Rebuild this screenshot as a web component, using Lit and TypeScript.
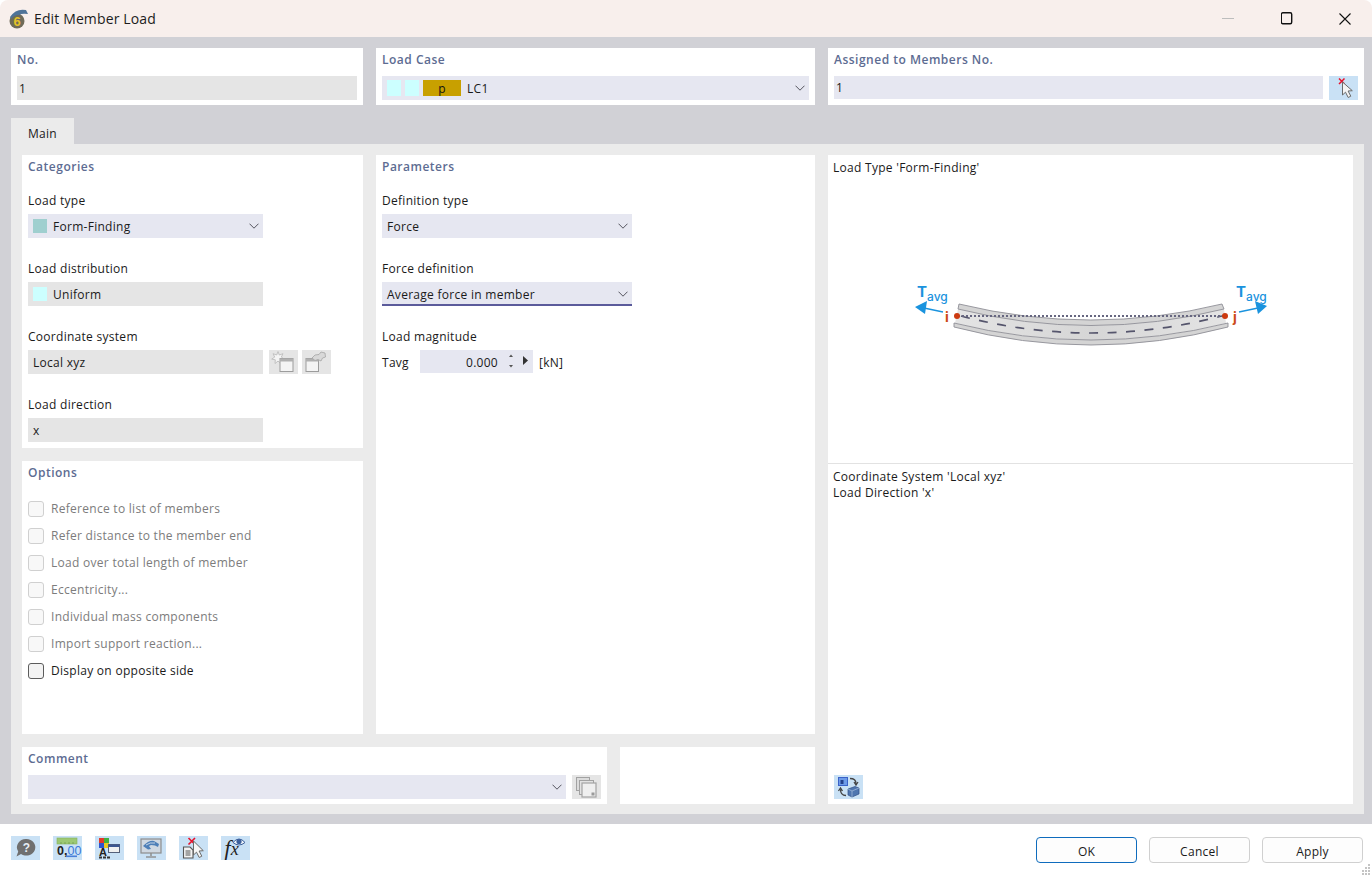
import { LitElement, html, css } from "lit";
import { customElement } from "lit/decorators.js";

const chevron = html`<svg class="chev" viewBox="0 0 10 6" width="10" height="6"><path d="M.5 .7 L5 5.200 L9.500 .7" fill="none" stroke="#55555f" stroke-width="1"/></svg>`;

const winNew = html`<svg viewBox="0 0 29 24" width="29" height="24">
  <path d="M9 1.500 l1.300 3.500 3.700-1.300-1.700 3.400 3 2-3.600.7 .3 3.700-3-2.400-3 2.400 .3-3.700-3.600-.7 3-2-1.700-3.400 3.700 1.300z" fill="#f4f4f4" stroke="#b8b8b8" stroke-width=".8"/>
  <rect x="11" y="8.500" width="13" height="13" fill="#f4f4f4" stroke="#9c9c9c"/><rect x="11" y="8.500" width="13" height="3" fill="#b0b0b0"/></svg>`;
const winEdit = html`<svg viewBox="0 0 29 24" width="29" height="24">
  <rect x="4" y="8.500" width="12.500" height="13" fill="#f4f4f4" stroke="#9c9c9c"/><rect x="4" y="8.500" width="12.500" height="3" fill="#b0b0b0"/>
  <path d="M10 8 l3-3 4-.5 2-2.500 4 1 .5 4-3 1-1.500 3-3-1.500-3 1z" fill="#d8d8d8" stroke="#a5a5a5" stroke-width=".8"/></svg>`;
const stackIcon = html`<svg viewBox="0 0 29 24" width="29" height="24">
  <rect x="4.500" y="2.500" width="13" height="13" fill="#dcdcdc" stroke="#a2a2a2"/><rect x="7.500" y="5.500" width="14" height="14" fill="#e2e2e2" stroke="#a2a2a2"/><rect x="10" y="8" width="14" height="14" fill="#efefef" stroke="#a2a2a2" stroke-width="1.200"/><rect x="19.500" y="17.500" width="3" height="3" fill="#9a9a9a"/></svg>`;
const pickIcon = html`<svg viewBox="0 0 29 24" width="29" height="24">
  <path d="M10 2.500 l5.500 5.500 M15.500 2.500 l-5.500 5.500" stroke="#e8102a" stroke-width="1.500"/>
  <path d="M13.500 6 v13 l3-2.800 2.700 5.300 2.600-1.300-2.700-5.200 4.200-.3z" fill="#f4f4f4" stroke="#6a6a6a"/></svg>`;
const swapIcon = html`<svg viewBox="0 0 29 24" width="29" height="24">
  <rect x="4.500" y="2.500" width="9" height="8" fill="#6d9be8" stroke="#3a62c8"/><path d="M6.500 9 v-4 h3 v4z" fill="#23408c"/>
  <path d="M16 3.500 q6 0 6 5 M20 7 l2 3 2-3" fill="none" stroke="#444" stroke-width="1.300"/>
  <path d="M12 20.500 q-5.500 0-5.500-6 M4.500 16 l2-3 2 3" fill="none" stroke="#444" stroke-width="1.300"/>
  <path d="M14 14 l7-2.500 4 1.500 v6 l-7 3-4-2z" fill="#4f76b0" stroke="#2f4f86" stroke-width=".7"/><path d="M14 14 l4 2 7-3 M18 16 v6" stroke="#a9c0de" stroke-width=".7" fill="none"/></svg>`;

const helpIcon = html`<svg viewBox="0 0 29 24" width="29" height="24">
  <path d="M15.500 3 a9 8.300 0 1 1-5.500 15 l-4.500 2.500 1.700-5 A9 8.300 0 0 1 15.500 3z" fill="#6f6f6f"/>
  <text x="15.500" y="16" class="ic-q">?</text></svg>`;
const numIcon = html`<svg viewBox="0 0 29 24" width="29" height="24">
  <rect x="4" y="2" width="20" height="6" fill="#9cc873" stroke="#86b35c" stroke-width=".6"/>
  <path d="M8 6 v2 M12 6 v2 M16 6 v2 M20 6 v2" stroke="#6f9a4a" stroke-width=".7"/>
  <text x="4" y="18.500" class="ic-num">0,<tspan class="ic-numb">00</tspan></text>
  <rect x="13" y="19.500" width="11" height="1.600" fill="#4a7fd8"/></svg>`;
const colorIcon = html`<svg viewBox="0 0 29 24" width="29" height="24">
  <rect x="4" y="2" width="5" height="5" fill="#e23a2a"/><rect x="9" y="2" width="5" height="5" fill="#3fb13f"/>
  <rect x="4" y="7" width="5" height="5" fill="#2c55d0"/><rect x="9" y="7" width="5" height="5" fill="#e8c81e"/>
  <text x="4" y="20" class="ic-a">A</text><rect x="4" y="20.500" width="3" height="2" fill="#333"/><rect x="8" y="20.500" width="3" height="2" fill="#333"/><rect x="12" y="20.500" width="3" height="2" fill="#333"/>
  <rect x="13.500" y="8.500" width="11" height="8" fill="#f0f0f0" stroke="#55607a"/><rect x="13.500" y="8.500" width="11" height="2.500" fill="#3b5590"/></svg>`;
const monIcon = html`<svg viewBox="0 0 29 24" width="29" height="24">
  <rect x="4" y="3" width="20" height="14" fill="#cfd8e2" stroke="#8d8d8d" stroke-width="1.200"/>
  <path d="M6 10 q6-6 11-5 l5 3-1 3-3-1.500-4-.5-2 1 2 3-3 .5z" fill="#4d7fb8"/>
  <path d="M9 9 q4-3 9-2" stroke="#dfe8f2" fill="none" stroke-width=".8"/>
  <path d="M14 17 v3" stroke="#8d8d8d" stroke-width="1.500"/><path d="M9 21 h10" stroke="#8d8d8d" stroke-width="1.400"/></svg>`;
const docIcon = html`<svg viewBox="0 0 29 24" width="29" height="24">
  <path d="M9.500 2 l6.500 6.500 M16 2 l-6.500 6.500" stroke="#e8102a" stroke-width="1.600"/>
  <path d="M4.500 11 h6.500 l3 3 v8 h-9.500z" fill="#f3f3f3" stroke="#555" stroke-width="1.100"/>
  <path d="M6.500 15 h5 M6.500 17 h5 M6.500 19 h5" stroke="#555"/>
  <path d="M14.500 5 v14 l3-2.800 2.700 5.300 2.600-1.300-2.700-5.200 4.200-.3z" fill="#f6f6f6" stroke="#6a6a6a"/></svg>`;
const fxIcon = html`<svg viewBox="0 0 29 24" width="29" height="24">
  <text x="3.500" y="18.500" class="ic-fx">f<tspan class="ic-x">x</tspan></text>
  <path d="M12 6.500 q6-7 12 0 q-6 5-12 0z" fill="#f2f6fa" stroke="#3a5f9c" stroke-width="1"/><circle cx="18" cy="5.500" r="2.600" fill="#3a5f9c"/></svg>`;

const diagram = html`<svg class="diagram" viewBox="880 270 420 90" width="420" height="90">
  <defs><linearGradient id="beam" x1="0" x2="1" y1="0" y2="0">
    <stop offset="0" stop-color="#e4e4e4"/><stop offset=".5" stop-color="#d6d6d6"/><stop offset="1" stop-color="#e4e4e4"/></linearGradient></defs>
  <path d="M958 309 Q1091 342 1224 309 L1226 323 Q1091 357 955 323z" fill="url(#beam)"/>
  <path d="M959 304 Q1091 336 1222 304 L1224 309 Q1091 342 958 309z" fill="#d4d4d4" stroke="#8f8f96" stroke-width=".9"/>
  <path d="M954 323 Q1091 357 1228 323 L1228 327 Q1091 363 954 327z" fill="#d4d4d4" stroke="#8f8f96" stroke-width=".9"/>
  <path d="M961 316 Q1091 350 1222 316" fill="none" stroke="#55556c" stroke-width="1.700" stroke-dasharray="9 9.500"/>
  <path d="M958 316 H1226" fill="none" stroke="#666680" stroke-width="2" stroke-dasharray="2 2"/>
  <circle cx="957" cy="316" r="3" fill="#cc3a10"/><circle cx="1225" cy="316" r="3" fill="#cc3a10"/>
  <text x="945" y="322" class="d-ij">i</text><text x="1233" y="322" class="d-ij">j</text>
  <path d="M943 312 L924 308" stroke="#1a93de" stroke-width="1.500"/><path d="M915 307 L927 301 L925 314z" fill="#1a93de"/>
  <path d="M1239 312 L1258 308" stroke="#1a93de" stroke-width="1.500"/><path d="M1267 306 L1255 301 L1258 314z" fill="#1a93de"/>
  <text x="917" y="297" class="d-t">T</text><text x="927" y="301" class="d-avg">avg</text>
  <text x="1236" y="297" class="d-t">T</text><text x="1246" y="301" class="d-avg">avg</text>
</svg>`;

const options: [string, boolean][] = [
  ["Reference to list of members", false],
  ["Refer distance to the member end", false],
  ["Load over total length of member", false],
  ["Eccentricity...", false],
  ["Individual mass components", false],
  ["Import support reaction...", false],
  ["Display on opposite side", true],
];

@customElement("app-root")
export class AppRoot extends LitElement {
  static styles = css`
    :host { display: block; width: 1372px; height: 875px; overflow: hidden; background: #fff; font-family: "Open Sans", "Noto Sans", sans-serif; font-size: 12px; letter-spacing: .28px; color: #1a1a1a; }
    * { box-sizing: border-box; }
    .window { position: relative; display: flex; flex-direction: column; height: 875px; }
    .titlebar { height: 37px; flex: none; background: #f8efec; display: flex; align-items: center; padding: 0 21px 0 8px; border-top-left-radius: 8px; border-top-right-radius: 8px; }
    .title { margin-left: 6px; font-size: 14px; letter-spacing: .13px; flex: 1; color: #1c1c1c; }
    .logo { display: block; }
    .winbtns { display: flex; align-items: center; gap: 46.500px; }
    .winbtns svg { display: block; }
    .body { flex: 1; background: #d1d1d6; padding: 11px 8px 10px 11px; display: flex; flex-direction: column; }
    .toprow { display: grid; grid-template-columns: 352px 439px 536px; column-gap: 13px; height: 57px; flex: none; }
    .card { background: #fff; }
    .top-card { padding: 0 6px; }
    .head { height: 22px; line-height: 22px; padding-top: 1px; font-weight: 600; color: #5d6c92; font-size: 12px; letter-spacing: .5px; }
    .top-card .head { margin-bottom: 6px; }
    .field { height: 24px; display: flex; align-items: center; padding: 0 5px; background: #e5e5e5; white-space: nowrap; }
    .field.lav { background: #e6e7f1; }
    .field.combo { background: #e6e7f1; justify-content: flex-start; }
    .field .chev { margin-left: auto; margin-right: -1px; }
    .field.under { border-bottom: 2px solid #5b5b9b; padding-top: 2px; }
    .field.short { height: 23px; }
    .no { padding-left: 2px; }
    .sw { width: 14px; height: 14px; background: #ccffff; margin-right: 6px; flex: none; }
    .sw.teal { background: #9fcfcf; }
    .lc .s1 { width: 14px; height: 16px; background: #ccffff; margin-right: 4px; }
    .lc .s2 { width: 38px; height: 16px; background: #c8a000; margin-right: 6px; color: #111; text-align: center; line-height: 17px; }
    .row { display: flex; gap: 6px; }
    .pair { display: flex; gap: 4px; }
    .grow { flex: 1; }
    .iconbtn { width: 29px; height: 24px; flex: none; background: #e5e5e5; display: block; }
    .iconbtn svg { display: block; }
    .iconbtn.blue { background: #c9e1f5; }
    .tab { width: 63px; height: 26px; margin-top: 13px; flex: none; background: #ebebeb; text-align: center; line-height: 32px; color: #1a1a1a; }
    .tabpanel { flex: 1; background: #ebebeb; padding: 11px 11px 10px 11px; display: grid; grid-template-columns: 793px 525px; column-gap: 13px; }
    .left { display: flex; flex-direction: column; gap: 13px; }
    .upper { flex: 1; display: grid; grid-template-columns: 341px 439px; column-gap: 13px; }
    .stack { display: flex; flex-direction: column; gap: 13px; }
    .cat { height: 293px; padding: 0 6px; }
    .opt { flex: 1; padding: 0 6px; }
    .par { padding: 0 6px; }
    .group { margin-bottom: 20px; }
    .first { margin-top: 13px; }
    .lab { height: 24px; line-height: 20px; padding-top: 1px; padding-bottom: 3px; }
    .w235 { width: 235px; }
    .w250 { width: 250px; }
    .checks { margin-top: 12px; }
    .check { height: 27px; display: flex; align-items: center; color: #7c7c7c; }
    .check.on { color: #1a1a1a; }
    .box { width: 16px; height: 16px; border-radius: 3px; border: 1px solid #d0d0d0; background: #f8f8f8; margin-right: 7px; flex: none; }
    .check.on .box { border-color: #5c5c5c; background: #f3f3f3; }
    .tavg { display: flex; align-items: center; height: 23px; }
    .tavg .name { width: 38px; padding-top: 1px; }
    .spin { width: 113px; height: 23px; background: #e6e7f1; display: flex; align-items: center; padding: 1px 35px 0 0; justify-content: flex-end; position: relative; }
    .spin svg { position: absolute; left: 85px; top: 4px; }
    .unit { margin-left: 6px; padding-top: 1px; }
    .lower { height: 57px; flex: none; display: grid; grid-template-columns: 585px 195px; column-gap: 13px; }
    .comment { padding: 0 6px; }
    .comment .head { margin-bottom: 6px; }
    .right { display: flex; flex-direction: column; }
    .preview { height: 309px; flex: none; border-bottom: 1px solid #e2e2e2; padding: 5px 5px 0; line-height: 16px; }
    .diagram { display: block; margin: 94px 0 0 47px; }
    .d-ij { font: 700 14px "Inter", sans-serif; fill: #cc4a18; letter-spacing: 0; }
    .d-t { font: 700 15px "Inter", sans-serif; fill: #1a93de; letter-spacing: 0; }
    .d-avg { font: 500 12px "Inter", sans-serif; fill: #1a93de; letter-spacing: 0; }
    .desc { flex: 1; padding: 5px 5px 5px 5px; line-height: 16px; display: flex; flex-direction: column; }
    .desc .iconbtn { margin: auto 0 0 1px; }
    .footer { height: 51px; flex: none; background: #fff; display: flex; padding: 12px 9px 0 11px; }
    .tools { display: flex; gap: 13px; }
    .btns { margin-left: auto; display: flex; gap: 12px; padding-top: 1px; }
    .btn { width: 101px; height: 26px; border: 1px solid #d0d0d0; border-radius: 4px; background: #fdfdfd; text-align: center; line-height: 27px; color: #1a1a1a; }
    .btn.ok { border-color: #0f6cbd; }
    .grip { position: absolute; right: 0; bottom: 0; display: block; }
    .ic-q { font: 700 12px "Liberation Sans", sans-serif; fill: #e6eef6; text-anchor: middle; letter-spacing: 0; }
    .ic-num { font: 700 12.500px "Liberation Sans", sans-serif; fill: #222; letter-spacing: 0; }
    .ic-numb { fill: #3a78d8; font-weight: 400; }
    .ic-a { font: 700 11px "Liberation Sans", sans-serif; fill: #222; letter-spacing: 0; }
    .ic-fx { font: italic 400 22px "Liberation Serif", serif; fill: #222; letter-spacing: 0; }
    .ic-x { font-size: 18px; }
    .logo-6 { font: 700 13px "Liberation Sans", sans-serif; fill: #e6c228; text-anchor: middle; letter-spacing: 0; }
  `;

  render() {
    return html`<div class="window">
      <div class="titlebar">
        <svg class="logo" viewBox="0 0 20 20" width="20" height="20">
          <circle cx="9" cy="12" r="7.500" fill="#6f6b58"/>
          <text x="9" y="17" class="logo-6">6</text>
          <path d="M2 8 Q8 -1 18 1 L20 5 Q14 4 11 6 Q6 6 3 10z" fill="#4f7398"/>
        </svg>
        <div class="title">Edit Member Load</div>
        <div class="winbtns">
          <svg width="12" height="12" viewBox="0 0 12 12"><path d="M0 5.500 H12" stroke="#bdbdbd"/></svg>
          <svg width="12" height="13" viewBox="0 0 12 13"><rect x=".3" y=".7" width="10.400" height="11" rx="1.500" fill="none" stroke="#111" stroke-width="1.400"/></svg>
          <svg width="12" height="12" viewBox="0 0 12 12"><path d="M.5 .5 L11.500 11.500 M11.500 .5 L.5 11.500" stroke="#111" stroke-width="1.100"/></svg>
        </div>
      </div>

      <div class="body">
        <div class="toprow">
          <div class="card top-card">
            <div class="head">No.</div>
            <div class="field no">1</div>
          </div>
          <div class="card top-card">
            <div class="head">Load Case</div>
            <div class="field combo lc"><span class="s1"></span><span class="s1"></span><span class="s2">p</span>LC1${chevron}</div>
          </div>
          <div class="card top-card">
            <div class="head">Assigned to Members No.</div>
            <div class="row">
              <div class="field lav short grow no">1</div>
              <div class="iconbtn blue">${pickIcon}</div>
            </div>
          </div>
        </div>

        <div class="tab">Main</div>
        <div class="tabpanel">
          <div class="left">
            <div class="upper">
              <div class="stack">
                <div class="card cat">
                  <div class="head">Categories</div>
                  <div class="group first">
                    <div class="lab">Load type</div>
                    <div class="field combo w235"><span class="sw teal"></span>Form-Finding${chevron}</div>
                  </div>
                  <div class="group">
                    <div class="lab">Load distribution</div>
                    <div class="field w235"><span class="sw"></span>Uniform</div>
                  </div>
                  <div class="group">
                    <div class="lab">Coordinate system</div>
                    <div class="row">
                      <div class="field w235">Local xyz</div>
                      <div class="pair">
                        <div class="iconbtn">${winNew}</div>
                        <div class="iconbtn">${winEdit}</div>
                      </div>
                    </div>
                  </div>
                  <div class="group">
                    <div class="lab">Load direction</div>
                    <div class="field w235">x</div>
                  </div>
                </div>
                <div class="card opt">
                  <div class="head">Options</div>
                  <div class="checks">
                    ${options.map(([t, on]) => html`<div class="check ${on ? "on" : ""}"><span class="box"></span>${t}</div>`)}
                  </div>
                </div>
              </div>
              <div class="card par">
                <div class="head">Parameters</div>
                <div class="group first">
                  <div class="lab">Definition type</div>
                  <div class="field combo w250">Force${chevron}</div>
                </div>
                <div class="group">
                  <div class="lab">Force definition</div>
                  <div class="field combo under w250">Average force in member${chevron}</div>
                </div>
                <div class="group">
                  <div class="lab">Load magnitude</div>
                  <div class="tavg">
                    <div class="name">Tavg</div>
                    <div class="spin">0.000
                      <svg width="24" height="16" viewBox="0 0 24 16"><path d="M4 3 L6 .5 L8 3z M4 11 L6 13.500 L8 11z" fill="#555"/><path d="M18 2 L23 6.500 L18 11z" fill="#333"/></svg>
                    </div>
                    <div class="unit">[kN]</div>
                  </div>
                </div>
              </div>
            </div>
            <div class="lower">
              <div class="card comment">
                <div class="head">Comment</div>
                <div class="row">
                  <div class="field combo grow">${chevron}</div>
                  <div class="iconbtn">${stackIcon}</div>
                </div>
              </div>
              <div class="card"></div>
            </div>
          </div>
          <div class="card right">
            <div class="preview">Load Type 'Form-Finding'${diagram}</div>
            <div class="desc">
              <div>Coordinate System 'Local xyz'</div>
              <div>Load Direction 'x'</div>
              <div class="iconbtn blue">${swapIcon}</div>
            </div>
          </div>
        </div>
      </div>

      <div class="footer">
        <div class="tools">
          ${[helpIcon, numIcon, colorIcon, monIcon, docIcon, fxIcon].map((i) => html`<div class="iconbtn blue">${i}</div>`)}
        </div>
        <div class="btns">
          <div class="btn ok">OK</div>
          <div class="btn">Cancel</div>
          <div class="btn">Apply</div>
        </div>
      </div>
      <svg class="grip" width="12" height="12" viewBox="0 0 12 12" fill="#c4c4c4">
        <rect x="8" y="1" width="2" height="2"/><rect x="5" y="4" width="2" height="2"/><rect x="8" y="4" width="2" height="2"/>
        <rect x="2" y="7" width="2" height="2"/><rect x="5" y="7" width="2" height="2"/><rect x="8" y="7" width="2" height="2"/>
        <rect x="2" y="10" width="2" height="2"/><rect x="5" y="10" width="2" height="2"/><rect x="8" y="10" width="2" height="2"/>
      </svg>
    </div>`;
  }
}
